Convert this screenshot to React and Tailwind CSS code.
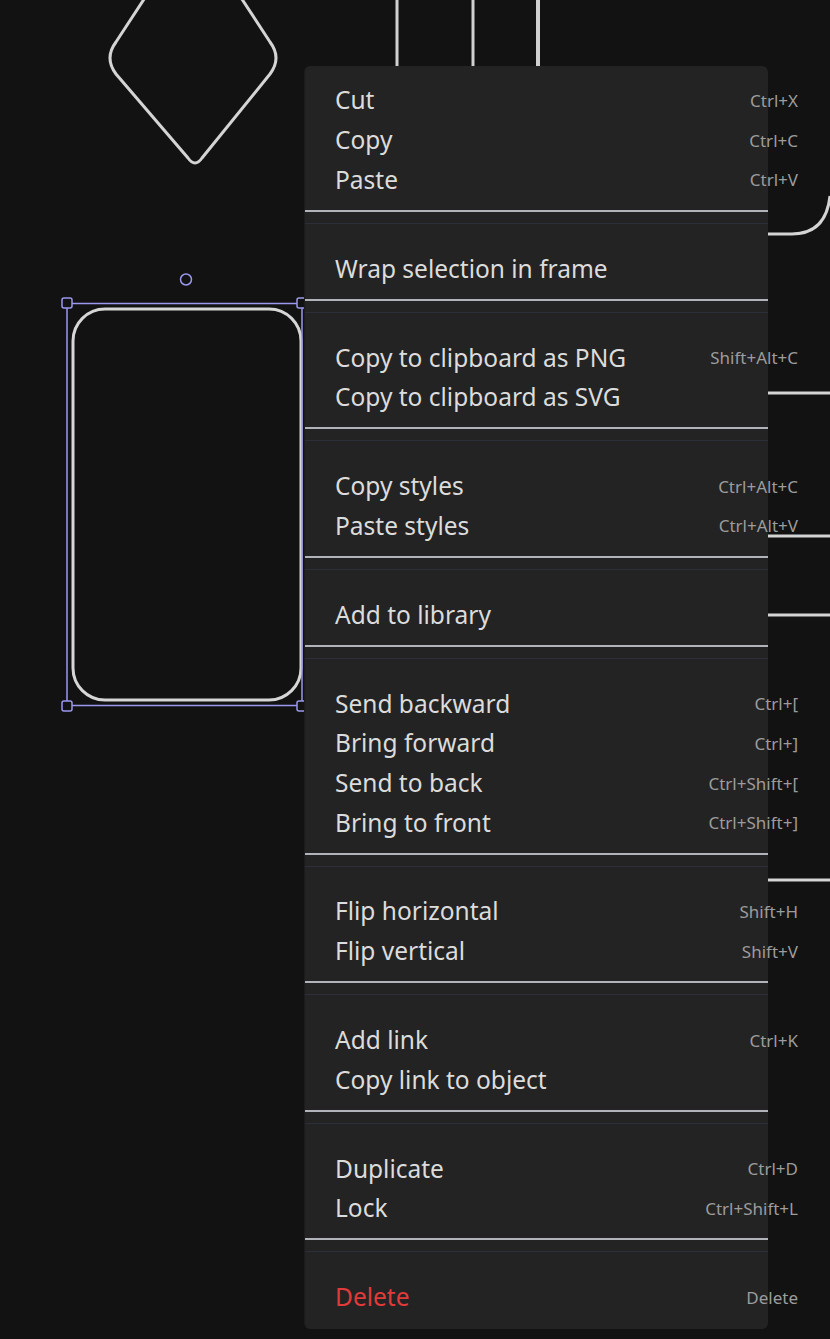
import React from 'react'

const sections = [
  [
    ['Cut', 'Ctrl+X'],
    ['Copy', 'Ctrl+C'],
    ['Paste', 'Ctrl+V'],
  ],
  [['Wrap selection in frame', '']],
  [
    ['Copy to clipboard as PNG', 'Shift+Alt+C'],
    ['Copy to clipboard as SVG', ''],
  ],
  [
    ['Copy styles', 'Ctrl+Alt+C'],
    ['Paste styles', 'Ctrl+Alt+V'],
  ],
  [['Add to library', '']],
  [
    ['Send backward', 'Ctrl+['],
    ['Bring forward', 'Ctrl+]'],
    ['Send to back', 'Ctrl+Shift+['],
    ['Bring to front', 'Ctrl+Shift+]'],
  ],
  [
    ['Flip horizontal', 'Shift+H'],
    ['Flip vertical', 'Shift+V'],
  ],
  [
    ['Add link', 'Ctrl+K'],
    ['Copy link to object', ''],
  ],
  [
    ['Duplicate', 'Ctrl+D'],
    ['Lock', 'Ctrl+Shift+L'],
  ],
  [['Delete', 'Delete', true]],
]

function Canvas() {
  return (
    <svg className="absolute inset-0" width="830" height="1339" viewBox="0 0 830 1339" fill="none">
      {/* diamond */}
      <path
        d="M150 -10 Q193 -60 236 -10 L270 42 Q282 58 270 74 L202 158 Q195 168 188 158 L116 74 Q104 58 116 42 Z"
        stroke="#d4d4d4"
        strokeWidth="3"
      />
      {/* vertical lines at top */}
      <line x1="397" y1="0" x2="397" y2="70" stroke="#d0d0d0" strokeWidth="3" />
      <line x1="473" y1="0" x2="473" y2="70" stroke="#d0d0d0" strokeWidth="3" />
      <line x1="538" y1="0" x2="538" y2="70" stroke="#d0d0d0" strokeWidth="4" />
      {/* right shapes */}
      <path d="M760 234 L792 234 Q826 234 830 196" stroke="#d4d4d4" strokeWidth="3" />
      <line x1="760" y1="393" x2="830" y2="393" stroke="#d4d4d4" strokeWidth="3" />
      <line x1="760" y1="536" x2="830" y2="536" stroke="#d4d4d4" strokeWidth="3" />
      <line x1="760" y1="615" x2="830" y2="615" stroke="#d4d4d4" strokeWidth="3" />
      <line x1="760" y1="880" x2="830" y2="880" stroke="#d4d4d4" strokeWidth="3" />
      {/* selected rounded rect */}
      <rect x="73" y="309" width="228" height="391" rx="32" stroke="#d6d6d6" strokeWidth="3" />
      {/* selection box */}
      <rect x="67" y="303.5" width="235" height="402" stroke="#9b98f0" strokeWidth="1.5" />
      <rect x="62" y="298" width="10" height="10" rx="2" fill="#121212" stroke="#9b98f0" strokeWidth="1.5" />
      <rect x="297" y="298" width="10" height="10" rx="2" fill="#121212" stroke="#9b98f0" strokeWidth="1.5" />
      <rect x="62" y="701" width="10" height="10" rx="2" fill="#121212" stroke="#9b98f0" strokeWidth="1.5" />
      <rect x="297" y="701" width="10" height="10" rx="2" fill="#121212" stroke="#9b98f0" strokeWidth="1.5" />
      <circle cx="186" cy="279.5" r="5.5" stroke="#9b98f0" strokeWidth="1.5" />
    </svg>
  )
}

function Item({ label, shortcut, danger }) {
  return (
    <div className="flex h-[39.6px] w-[493px] items-center justify-between pl-[30px] pt-[2px]">
      <span className={danger ? 'text-[24.5px] text-[#e03a3a]' : 'text-[24.5px] text-[#dcdcdc]'}>{label}</span>
      <span className="text-[17px] text-[#9c9c9c]">{shortcut}</span>
    </div>
  )
}

function Separator() {
  return (
    <div className="h-[49.4px] pt-[11px]">
      <div className="h-[2px] bg-[#b0b3ba]" />
      <div className="mt-[11px] h-px bg-[#2c2e3a]" />
    </div>
  )
}

export default function App() {
  return (
    <div
      className="relative h-[1339px] w-[830px] overflow-hidden bg-[#121212]"
      style={{ fontFamily: '"Noto Sans", "Open Sans", sans-serif' }}
    >
      <Canvas />
      <div className="absolute left-[304px] top-[66px] w-[464px] rounded-[6px] border-l border-[#1c1c1c] bg-[#232323] pb-[13px] pt-[14px]">
        {sections.map((sec, i) => (
          <div key={i}>
            {sec.map(([label, sc, danger]) => (
              <Item key={label} label={label} shortcut={sc} danger={danger} />
            ))}
            {i < sections.length - 1 && <Separator />}
          </div>
        ))}
      </div>
    </div>
  )
}
